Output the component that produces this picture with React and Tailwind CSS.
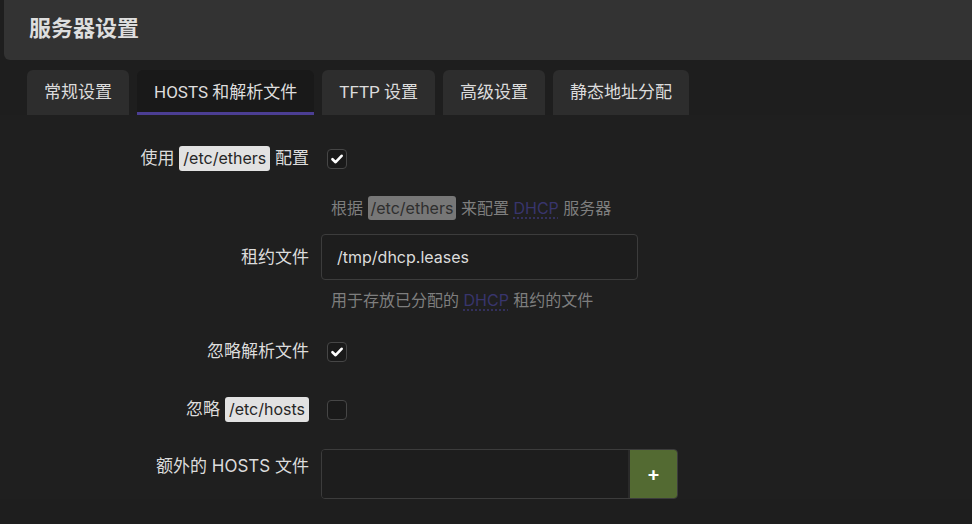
import React from "react";

const font = { fontFamily: '"Inter", "Noto Sans CJK SC", sans-serif' };

const tabs = ["常规设置", "HOSTS 和解析文件", "TFTP 设置", "高级设置", "静态地址分配"];

// small checkbox like the luci theme draws it
const Check = ({ checked }) => (
    <div className="mt-[3px] ml-[6px] w-[20px] h-[20px] rounded-[4px] border border-[#464646] bg-[#1a1a1a] flex items-center justify-center">
        {checked && (
            <svg width="12" height="10" viewBox="0 0 12 10">
                <path d="M1.5 5.2 L4.6 8.2 L10.6 1.8" fill="none" stroke="#fff" strokeWidth="2.6" strokeLinecap="round" strokeLinejoin="round" />
            </svg>
        )}
    </div>
);

const Code = ({ children }) => (
    <span className="inline-block px-[4px] rounded-[3px] bg-[#e2e2e2] text-[#262626] text-[16px] leading-[25px]">
        {children}
    </span>
);

const Dhcp = () => (
    <span className="text-[#38356c] underline decoration-dotted underline-offset-[4px] decoration-[#38356c]">DHCP</span>
);

const Label = ({ children, className = "" }) => (
    <div className={"w-[309px] text-right text-[17px] leading-[25px] text-[#dcdcdc] " + className}>{children}</div>
);

export default function App() {
    return (
        <div className="w-[972px] h-[524px] overflow-hidden bg-[#1e1e1e]" style={font}>
            {/* header */}
            <div className="ml-[4px] h-[60px] bg-[#333333] rounded-bl-[6px] flex items-center pl-[25px]">
                <h1 className="text-[22px] font-bold text-[#dedede] leading-none -mt-[4px]">服务器设置</h1>
            </div>

            {/* tabs */}
            <div className="flex gap-[8px] pl-[27px] mt-[10px] h-[45px] font-['Roboto','Noto_Sans_CJK_SC',sans-serif]">
                {tabs.map((t, i) => (
                    <div
                        key={t}
                        className={
                            "px-[17px] rounded-t-[6px] text-[17px] flex items-center " +
                            (i === 1
                                ? "bg-[#191919] text-[#dedede] border-b-[3px] border-[#4b3e93] pt-[3px]"
                                : "bg-[#2d2d2d] text-[#dcdcdc]")
                        }
                    >
                        {t}
                    </div>
                ))}
            </div>

            {/* form */}
            <div className="bg-[#1f1f1f] pt-[31px]">
                <div className="flex items-start gap-[12px] h-[25px]">
                    <Label>
                        使用 <Code>/etc/ethers</Code> 配置
                    </Label>
                    <Check checked />
                </div>

                <div className="pl-[331px] mt-[25px] text-[16px] leading-[24px] text-[#7e7e7e]">
                    根据 <span className="inline-block px-[3px] rounded-[3px] bg-[#777777] text-[#2e2e2e]">/etc/ethers</span> 来配置 <Dhcp /> 服务器
                </div>

                <div className="flex items-center gap-[12px] mt-[14px]">
                    <Label>租约文件</Label>
                    <div className="w-[317px] h-[46px] rounded-[4px] border border-[#3c3c3c] bg-[#1d1d1d] flex items-center pl-[15px] text-[16px] text-[#dcdcdc]">
                        /tmp/dhcp.leases
                    </div>
                </div>

                <div className="pl-[331px] mt-[8px] text-[16px] leading-[24px] text-[#7e7e7e]">
                    用于存放已分配的 <Dhcp /> 租约的文件
                </div>

                <div className="flex items-start gap-[12px] h-[25px] mt-[27px]">
                    <Label>忽略解析文件</Label>
                    <Check checked />
                </div>

                <div className="flex items-start gap-[12px] h-[25px] mt-[33px]">
                    <Label>
                        忽略 <Code>/etc/hosts</Code>
                    </Label>
                    <Check />
                </div>

                <div className="flex items-start gap-[12px] mt-[27px]">
                    <Label className="pt-[5px]">额外的 HOSTS 文件</Label>
                    <div className="flex h-[50px] rounded-[4px] border border-[#3c3c3c] overflow-hidden">
                        <div className="w-[306px] bg-[#1d1d1d]" />
                        <button className="w-[49px] bg-[#536a32] border-l-2 border-[#2a2a2a] text-white text-[20px] font-semibold flex items-center justify-center">
                            +
                        </button>
                    </div>
                </div>
            </div>
        </div>
    );
}
